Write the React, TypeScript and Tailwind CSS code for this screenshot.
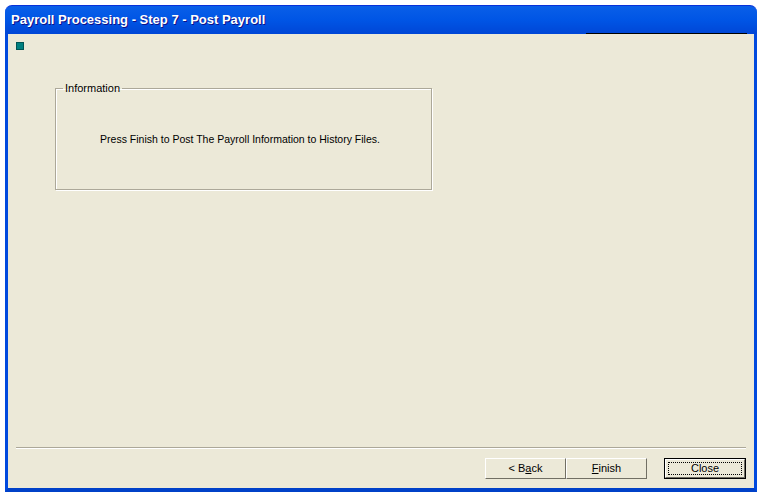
import React from 'react';

// XP-style wizard dialog: Payroll Processing step 7
const font = { fontFamily: '"Liberation Sans", Arial, sans-serif' };

const WinButton = ({ children, isDefault }: { children: React.ReactNode; isDefault?: boolean }) => {
  if (isDefault) {
    return (
      <button className="h-[21px] w-[82px] border border-black bg-[#ece9d8] p-0">
        <div className="h-full w-full border-t border-l border-t-white border-l-white border-r border-b border-r-[#716f64] border-b-[#716f64] p-[2px]">
          <div className="flex h-full w-full items-center justify-center border border-dotted border-black text-[11px] text-black">
            {children}
          </div>
        </div>
      </button>
    );
  }
  return (
    <button className="flex h-[21px] w-[81px] items-center justify-center border border-t-white border-l-white border-r-[#716f64] border-b-[#716f64] bg-[#ece9d8] text-[11px] text-black">
      {children}
    </button>
  );
};

export default function App() {
  return (
    <div className="h-[492px] w-[759px] overflow-hidden bg-white pl-[5px] pt-[5px]" style={font}>
      <div className="flex h-[487px] w-[752px] flex-col">
        {/* title bar */}
        <div className="relative flex h-[29px] items-center rounded-t-[7px] border-t border-[#0831d9] bg-gradient-to-b from-[#0a5fe8] via-[#0055e5] to-[#0046d6] pl-[6px]">
          <span className="text-[13px] font-bold text-white [text-shadow:1px_1px_#0f1089]">
            Payroll Processing - Step 7 - Post Payroll
          </span>
          <div className="absolute bottom-0 left-[581px] h-px w-[161px] bg-black" />
        </div>

        {/* body */}
        <div className="flex flex-1 flex-col border-x-[3px] border-b-[4px] border-x-[#0049de] border-b-[#0041c8] bg-[#ece9d8]">
          <div className="ml-[8px] mt-[8px] h-[8px] w-[8px] border border-[#005555] bg-[#008080]" />

          <fieldset className="ml-[47px] mt-[32px] h-[108px] w-[377px] border border-[#aca899] px-0 shadow-[inset_1px_1px_0_#fff,1px_1px_0_#fff]">
            <legend className="ml-[7px] px-[2px] text-[11px] leading-[13px] text-black">Information</legend>
            <div className="mt-[37px] pr-[7px] text-center text-[10.5px] text-black">
              Press Finish to Post The Payroll Information to History Files.
            </div>
          </fieldset>

          <div className="flex-1" />

          <div className="mx-[8px] h-[2px] border-t border-b border-t-[#aca899] border-b-white" />

          <div className="mb-[9px] mr-[8px] mt-[9px] flex justify-end">
            <WinButton>
              &lt; B<u>a</u>ck
            </WinButton>
            <WinButton>
              <u>F</u>inish
            </WinButton>
            <div className="w-[17px]" />
            <WinButton isDefault>Close</WinButton>
          </div>
        </div>
      </div>
    </div>
  );
}
